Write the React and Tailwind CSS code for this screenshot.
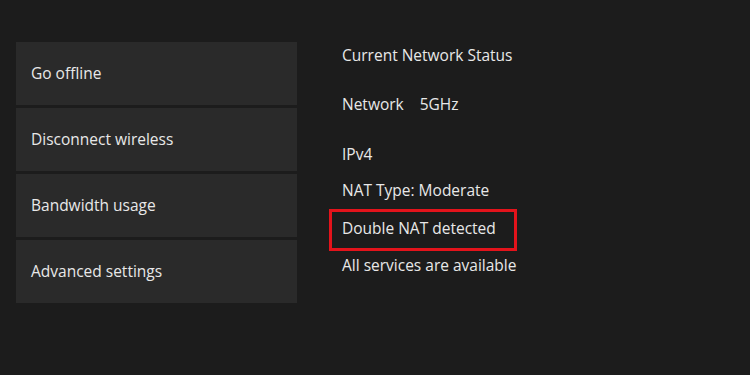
function App() {

  const menu = [
    "Go offline",
    "Disconnect wireless",
    "Bandwidth usage",
    "Advanced settings",
  ];

  return (

    <div
      className="w-[750px] h-[375px] bg-[#1c1c1c] text-[#e8e8e8] text-[15.5px] flex pt-[42px] pl-4"
      style={{ fontFamily: '"Open Sans", "Noto Sans", sans-serif' }}
    >

      <div className="w-[281px] flex flex-col gap-[3px]">
        {menu.map((item) => (
          <div
            key={item}
            className="h-[63px] bg-[#2a2a2a] flex items-center pl-[15px]"
          >
            {item}
          </div>
        ))}
      </div>

      <div className="ml-8 pt-[3px] flex flex-col items-start leading-5">

        <div className="pl-[13px]">Current Network Status</div>

        <div className="pl-[13px] mt-[29px] flex gap-[16px]">
          <span>Network</span>
          <span>5GHz</span>
        </div>

        <div className="pl-[13px] mt-[30px]">IPv4</div>

        <div className="pl-[13px] mt-4">NAT Type: Moderate</div>

        <div className="mt-[9px] w-[188px] border-[3px] border-[#e3131b] pl-[10px] pt-[6px] pb-[10px]">
          Double NAT detected
        </div>

        <div className="pl-[13px] mt-1">All services are available</div>

      </div>

    </div>
  );
}

export default App;
